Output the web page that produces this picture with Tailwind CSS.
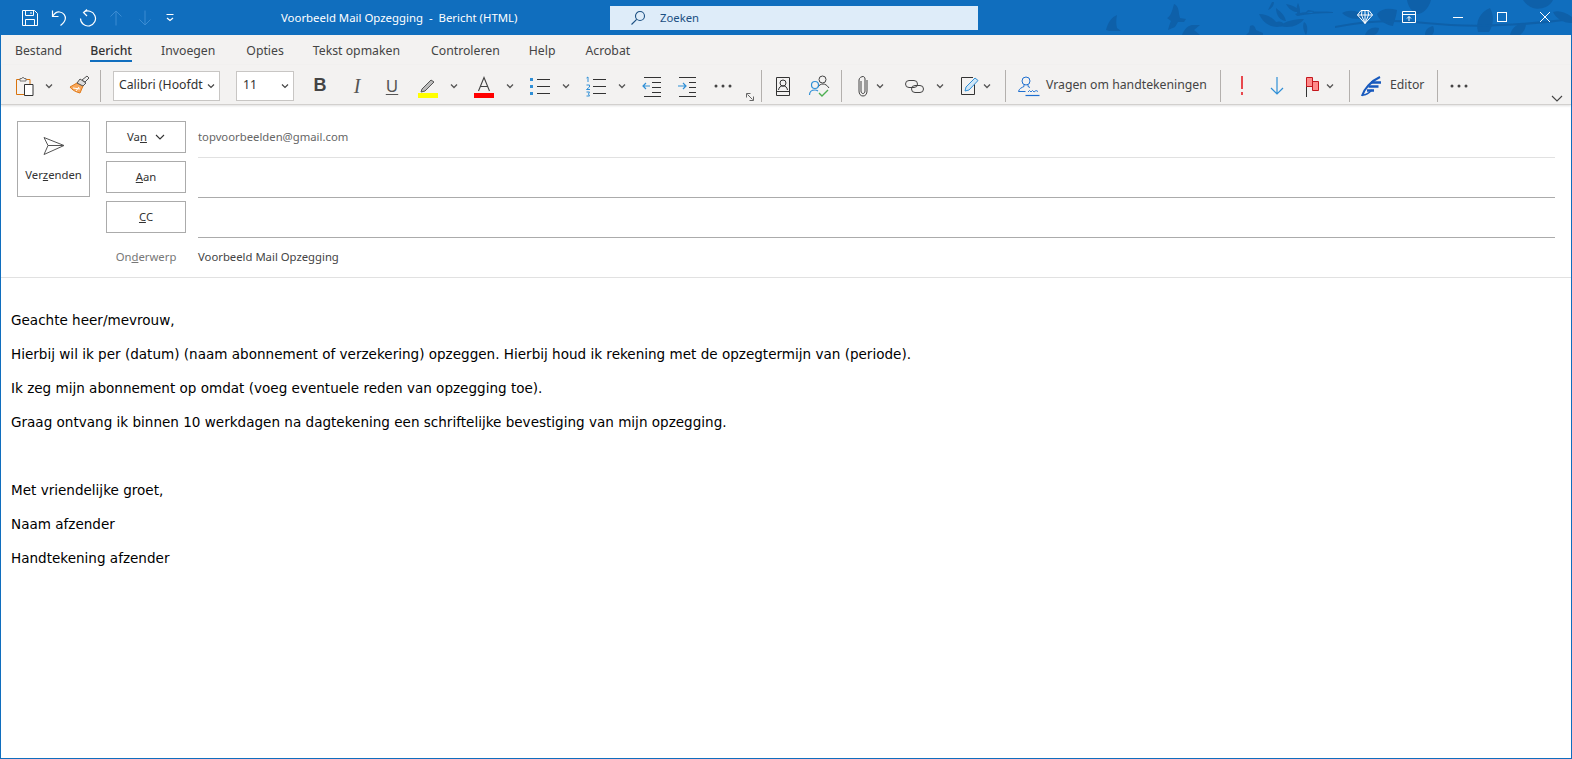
<!DOCTYPE html>
<html lang="nl">
  <head>
    <meta charset="UTF-8" />
    <title>Voorbeeld Mail Opzegging - Bericht (HTML)</title>
    <script src="https://cdn.jsdelivr.net/npm/@tailwindcss/browser@4"></script>
  </head>
  <body class="bg-white overflow-hidden">
    <div class="h-[759px] w-[1572px] flex flex-col border-x border-b border-[#106ebe] font-['Noto_Sans',sans-serif] text-[#444]">
      <!-- Title bar -->
      <div class="relative h-[35px] -mx-px bg-[#106ebe] flex items-center text-white shrink-0 overflow-hidden">
        <!-- leaves -->
        <svg class="absolute left-[1080px] top-0" width="492" height="35" viewBox="0 0 492 35" fill="#0e60a9">
          <path d="M26 30c2-8 6-13 11-15-1 5-1 9 0 13l4 3h-8c-3 0-5 0-7-1z" />
          <path d="M87 18c3-1 5-6 7-14 3 1 5 5 5 10l1 4 6 1-2 3-6 0-3 5-7 3c1-4 2-7 3-9z" />
          <path d="M102 35c2-5 5-9 10-10l8 0-6 5 6 5z" />
          <path d="M166 35l3-3 1-6c3-2 5 0 6 4l7 3 0 2z" />
          <path d="M179 14c6 0 12 2 17 8 3-1 6-1 9 3-6 3-12 2-16 0-4-2-8-6-10-11z" />
          <path d="M196 8c3 3 8 5 10 13-5 0-10-5-10-13zM206 4c6 1 11 3 14 8-5 1-11-2-14-8zM218 3c2 4 3 10 1 13-3-3-3-9-1-13zM192 2c-2 4-3 6-4 8 3-1 6-4 6-8z" />
          <path d="M200 26c6-5 13-7 24-7-4 6-14 10-24 7zM224 22c4 2 4 9 2 13-2-3-4-9-2-13z" />
          <path d="M215 14c8-2 20-3 38-2v1c-14 0-26 1-36 3zM226 12c3 1 7 2 8-1l-6-1z" />
          <path d="M262 13c8-4 16-2 24 3-8 5-18 3-24-3z" />
          <path d="M297 14c5-6 12-6 20-4-1 8-3 12-4 16-8-1-14-6-16-12z" />
          <path d="M327 0h24c-2 8-8 14-14 14-6-3-9-8-10-14z" />
          <path d="M398 32c-3-10 2-20 12-24 4 7 4 16-1 24z" />
          <path d="M443 0h30c-4 8-14 10-20 8-5-2-8-5-10-8z" />
          <path d="M255 26c30-6 60-8 90-4 40 4 80 4 147-4v2c-60 8-107 8-147 4-30-4-60-2-90 4z" />
          <path d="M430 35c2-8 8-12 16-12 0 5-2 9-6 12zM473 12c6-2 12 0 19 5v6c-10 0-16-5-19-11z" />
          <path d="M285 35c2-6 8-9 14-7 0 3-2 6-5 7zM345 35c0-5 3-8 8-9 2 4 1 7-1 9z" />
        </svg>

        <!-- quick access -->
        <div class="relative flex items-center">
          <span class="ml-[21px] w-[18px] h-[18px]">
            <svg width="18" height="18" viewBox="0 0 18 18" fill="none" stroke="#fff"><path d="M1.500 1.500h12l3 3v12h-15zM4.500 1.500v5h8v-5M4.500 16.500v-6h9v6M10 3v2" /></svg>
          </span>
          <span class="ml-[11px] w-[18px] h-[18px]">
            <svg width="18" height="18" viewBox="0 0 18 18" fill="none" stroke="#fff" stroke-width="1.200"><path d="M2.500 1.500v6h6M2.800 7c2-3 4.500-4.500 7-4 4 .7 6 4 5.500 7-.4 3-3 5-4.800 6.500" /></svg>
          </span>
          <span class="ml-[11px] w-[18px] h-[18px]">
            <svg width="18" height="18" viewBox="0 0 18 18" fill="none" stroke="#fff" stroke-width="1.200"><path d="M4.500 3.500a7.500 7.500 0 1 1-3 6M8 .5 4.500 3.500 8 7" /></svg>
          </span>
          <span class="ml-[10px] w-[18px] h-[18px]">
            <svg width="18" height="18" viewBox="0 0 18 18" fill="none" stroke="#3a8bd2"><path d="M9 16.500V2M3.500 7.500 9 2l5.500 5.500" /></svg>
          </span>
          <span class="ml-[11px] w-[18px] h-[18px]">
            <svg width="18" height="18" viewBox="0 0 18 18" fill="none" stroke="#3a8bd2"><path d="M9 1.500V16M3.500 10.500 9 16l5.500-5.500" /></svg>
          </span>
          <span class="ml-[11px] w-[10px] h-[10px]">
            <svg width="10" height="10" viewBox="0 0 10 10" fill="none" stroke="#fff"><path d="M1.500 1.500h7" /><path d="M2 5l3 2.500L8 5" stroke-width="1.200" /></svg>
          </span>
        </div>

        <div class="relative ml-[106px] w-[329px] text-[11.4px] whitespace-pre">Voorbeeld Mail Opzegging  -  Bericht (HTML)</div>
        <div class="relative w-[368px] h-[24px] mt-[1px] bg-[#deecf9] flex items-center text-[11.3px] text-[#1b4f82]">
          <svg class="ml-[20px]" width="16" height="16" viewBox="0 0 16 16" fill="none" stroke="#1b4f82" stroke-width="1.100"><circle cx="10" cy="6" r="4.500" /><path d="M6.700 9.300 1.500 14.500" /></svg>
          <span class="ml-[14px]">Zoeken</span>
        </div>

        <!-- window controls -->
        <div class="absolute right-0 top-0 h-full">
          <svg class="absolute right-[198px] top-[8px]" width="18" height="18" viewBox="0 0 18 18" fill="none" stroke="#fff"><path d="M5 2.500h8l3.500 4.500L9 15.500 1.500 7zM1.500 7h15M6 2.500 5.500 7 9 15.500 12.500 7 12 2.500M9 2.500V15" /></svg>
          <svg class="absolute right-[156px] top-[11px]" width="14" height="12" viewBox="0 0 14 12" fill="none" stroke="#fff"><path d="M.500.500h13v11H.500zM.500 3.500h13M7 10V5.500M5 7.500l2-2 2 2" /></svg>
          <span class="absolute right-[109px] top-[17px] w-[10px] h-px bg-white"></span>
          <span class="absolute right-[65px] top-[12px] w-[10px] h-[10px] border border-white"></span>
          <svg class="absolute right-[22px] top-[12px]" width="10" height="10" viewBox="0 0 10 10" stroke="#fff"><path d="M0 0l10 10M10 0 0 10" /></svg>
        </div>
      </div>

      <!-- Tabs -->
      <div class="h-[30px] shrink-0 bg-[#f3f2f1] flex items-start pl-[14px] text-[12.25px] leading-[32px] text-[#444]">
        <span>Bestand</span>
        <span class="relative ml-[28px] font-medium text-[#333]">
          Bericht
          <span class="absolute left-0 right-0 top-[25px] h-[2px] bg-[#106ebe]"></span>
        </span>
        <span class="ml-[29px]">Invoegen</span>
        <span class="ml-[31px]">Opties</span>
        <span class="ml-[29px]">Tekst opmaken</span>
        <span class="ml-[31px]">Controleren</span>
        <span class="ml-[29px]">Help</span>
        <span class="ml-[30px]">Acrobat</span>
      </div>

      <!-- Ribbon -->
      <div class="relative h-[40px] shrink-0 pt-[2px] bg-[#f3f2f1] border-b border-[#d2d0ce] shadow-[0_1px_2px_rgba(0,0,0,0.12)] flex items-center text-[12.25px] text-[#444]">
        <span class="ml-[11px] w-[24px] h-[24px]">
          <svg width="24" height="24" viewBox="0 0 24 24" fill="none">
            <path d="M4.500 5.500H18v15H4.500z" stroke="#d9730d" />
            <path d="M12.500 10.500H21v11h-8.500z" fill="#fff" stroke="#333" />
            <path d="M8 7V4.500h2l1-1.500 1 1.500h2V7z" fill="#f3f2f1" stroke="#777" />
          </svg>
        </span>
        <span class="ml-[6px] w-[14px] flex justify-center"><svg width="8" height="6" viewBox="0 0 8 6" fill="none" stroke="#555" stroke-width="1.300"><path d="M1 1.500l3 3 3-3" /></svg></span>
        <span class="ml-[11px] w-[24px] h-[24px]">
          <svg width="24" height="24" viewBox="0 0 24 24" fill="none">
            <path d="M3 13l7-4 6 3-3 7c-4-1-8-3-10-6z" fill="#f7a85c" stroke="#e07a1a" />
            <path d="M6 14l7 1M9 17l3-4" stroke="#fff" />
            <path d="M10 9l3-4 6 4-3 3z" fill="#ddd" stroke="#555" />
            <path d="M15 6l5-4 2 2-4 4z" fill="#eee" stroke="#555" />
          </svg>
        </span>
        <span class="ml-[9px] w-px h-[32px] bg-[#b3b0ad]"></span>

        <span class="ml-[12px] w-[107px] h-[30px] bg-white border border-[#c8c6c4] flex items-center justify-between pl-[5px] pr-[4px] text-[#323130] whitespace-nowrap">
          Calibri (Hoofdt
          <svg width="8" height="6" viewBox="0 0 8 6" fill="none" stroke="#444" stroke-width="1.200"><path d="M1 1.500l3 3 3-3" /></svg>
        </span>
        <span class="ml-[16px] w-[58px] h-[30px] bg-white border border-[#c8c6c4] flex items-center justify-between pl-[6px] pr-[4px] text-[#323130]">
          11
          <svg width="8" height="6" viewBox="0 0 8 6" fill="none" stroke="#444" stroke-width="1.200"><path d="M1 1.500l3 3 3-3" /></svg>
        </span>

        <span class="ml-[14px] w-[24px] text-center text-[18px] font-bold text-[#444] font-['Liberation_Sans',sans-serif]">B</span>
        <span class="ml-[13px] w-[24px] text-center text-[20px] italic text-[#555] font-['Liberation_Serif',serif]">I</span>
        <span class="ml-[11px] w-[24px] text-center text-[17px] text-[#555] underline underline-offset-2">U</span>

        <span class="ml-[12px] w-[24px] h-[24px]">
          <svg width="24" height="24" viewBox="0 0 24 24" fill="none">
            <path d="M6 15l9-9 3 2-9 9-4 1z" fill="#bbb" stroke="#555" />
            <path d="M2 19h20v5H2z" fill="#ffff00" />
          </svg>
        </span>
        <span class="ml-[7px] w-[14px] flex justify-center"><svg width="8" height="6" viewBox="0 0 8 6" fill="none" stroke="#555" stroke-width="1.300"><path d="M1 1.500l3 3 3-3" /></svg></span>
        <span class="ml-[11px] w-[24px] h-[24px]">
          <svg width="24" height="24" viewBox="0 0 24 24" fill="none">
            <path d="M6.500 17 12 3.500 17.500 17M8.500 12.500h7" stroke="#444" stroke-width="1.100" />
            <path d="M2 19h20v5H2z" fill="#f00" />
          </svg>
        </span>
        <span class="ml-[7px] w-[14px] flex justify-center"><svg width="8" height="6" viewBox="0 0 8 6" fill="none" stroke="#555" stroke-width="1.300"><path d="M1 1.500l3 3 3-3" /></svg></span>
        <span class="ml-[11px] w-[24px] h-[24px]">
          <svg width="24" height="24" viewBox="0 0 24 24">
            <path d="M2 4h3v3H2zM2 11h3v3H2zM2 18h3v3H2z" fill="#2f8fd6" />
            <path d="M9 5.500h13M9 12.500h13M9 19.500h13" stroke="#333" />
          </svg>
        </span>
        <span class="ml-[7px] w-[14px] flex justify-center"><svg width="8" height="6" viewBox="0 0 8 6" fill="none" stroke="#555" stroke-width="1.300"><path d="M1 1.500l3 3 3-3" /></svg></span>
        <span class="ml-[11px] w-[24px] h-[24px]">
          <svg width="24" height="24" viewBox="0 0 24 24" fill="none" stroke="#2f8fd6">
            <path d="M2.500 4 4 3v5M2.500 11h3v2l-3 2.500h3.500M2.500 18h3l-1 2 1 2h-3" />
            <path d="M9 5.500h13M9 12.500h13M9 19.500h13" stroke="#333" />
          </svg>
        </span>
        <span class="ml-[7px] w-[14px] flex justify-center"><svg width="8" height="6" viewBox="0 0 8 6" fill="none" stroke="#555" stroke-width="1.300"><path d="M1 1.500l3 3 3-3" /></svg></span>
        <span class="ml-[11px] w-[24px] h-[24px]">
          <svg width="24" height="24" viewBox="0 0 24 24" fill="none">
            <path d="M4 3.500h17M12 8.500h9M12 13.500h9M12 18.500h9M4 22.500h17" stroke="#333" />
            <path d="M10 12H3M6 9l-3 3 3 3" stroke="#2f8fd6" stroke-width="1.200" />
          </svg>
        </span>
        <span class="ml-[11px] w-[24px] h-[24px]">
          <svg width="24" height="24" viewBox="0 0 24 24" fill="none">
            <path d="M4 3.500h17M14 8.500h7M14 13.500h7M14 18.500h7M4 22.500h17" stroke="#333" />
            <path d="M3 12h8M8 9l3 3-3 3" stroke="#2f8fd6" stroke-width="1.200" />
          </svg>
        </span>
        <span class="ml-[12px] w-[24px] flex justify-center">
          <svg width="18" height="4" viewBox="0 0 18 4" fill="#444"><circle cx="2" cy="2" r="1.500" /><circle cx="9" cy="2" r="1.500" /><circle cx="16" cy="2" r="1.500" /></svg>
        </span>
        <span class="ml-[11px] w-[8px] h-[8px] self-end mb-[3px] mr-[2px]">
          <svg width="8" height="8" viewBox="0 0 8 8" fill="none" stroke="#555" stroke-width=".900"><path d="M.500 4.500V.500h4M1.500 1.500l5 5M7.500 3.500v4h-4" /></svg>
        </span>
        <span class="ml-[5px] w-px h-[32px] bg-[#b3b0ad]"></span>

        <span class="ml-[9px] w-[24px] h-[24px]">
          <svg width="24" height="24" viewBox="0 0 24 24" fill="none" stroke="#333">
            <path d="M5.500 3.500h13v18h-13zM5.500 17.500h13" />
            <circle cx="12" cy="9" r="3" />
            <path d="M7.500 16c.5-3 2-4 4.500-4s4 1 4.500 4" />
          </svg>
        </span>
        <span class="ml-[13px] w-[24px] h-[24px]">
          <svg width="24" height="24" viewBox="0 0 24 24" fill="none">
            <circle cx="14.500" cy="5.500" r="3.500" stroke="#444" />
            <path d="M10 13c1-2 3-3 5-3s4 1 6 4" stroke="#444" />
            <circle cx="7" cy="11" r="3.500" stroke="#2f8fd6" stroke-width="1.200" />
            <path d="M1.500 21c0-3 2-5 5.500-5 1 0 2 .3 3 1" stroke="#2f8fd6" stroke-width="1.200" />
            <path d="M11 19l3 3 6-6" stroke="#4caf50" stroke-width="1.400" />
          </svg>
        </span>
        <span class="ml-[9px] w-px h-[32px] bg-[#b3b0ad]"></span>

        <span class="ml-[11px] w-[20px] h-[24px] flex justify-center">
          <svg width="12" height="24" viewBox="0 0 12 24" fill="none" stroke="#444"><path d="M4 7v10c0 1.500.8 2.500 2 2.500s2-1 2-2.500V5C8 3.500 7 2.500 6 2.500S2 3.500 2 6v11c0 3 1.500 5 4 5s4-2 4-5V6" /></svg>
        </span>
        <span class="w-[14px] flex justify-center"><svg width="8" height="6" viewBox="0 0 8 6" fill="none" stroke="#555" stroke-width="1.300"><path d="M1 1.500l3 3 3-3" /></svg></span>
        <span class="ml-[14px] w-[24px] h-[24px]">
          <svg width="24" height="24" viewBox="0 0 24 24" fill="none" stroke="#444">
            <rect x="4.500" y="6.500" width="12" height="7" rx="3.500" />
            <rect x="10.500" y="11.500" width="12" height="7" rx="3.500" />
          </svg>
        </span>
        <span class="ml-[8px] w-[14px] flex justify-center"><svg width="8" height="6" viewBox="0 0 8 6" fill="none" stroke="#555" stroke-width="1.300"><path d="M1 1.500l3 3 3-3" /></svg></span>
        <span class="ml-[13px] w-[20px] h-[24px] flex items-center">
          <svg width="20" height="20" viewBox="0 0 20 20" fill="none">
            <path d="M13 1.500H1.500v17h13V8" stroke="#333" />
            <path d="M5 15l1-4 9-9 3 2.500-9 9.500z" fill="#cfe6f7" stroke="#2f8fd6" />
          </svg>
        </span>
        <span class="w-[14px] flex justify-center"><svg width="8" height="6" viewBox="0 0 8 6" fill="none" stroke="#555" stroke-width="1.300"><path d="M1 1.500l3 3 3-3" /></svg></span>
        <span class="ml-[11px] w-px h-[32px] bg-[#b3b0ad]"></span>

        <span class="ml-[10px] w-[24px] h-[24px]">
          <svg width="24" height="24" viewBox="0 0 24 24" fill="none" stroke="#1e6fd0">
            <circle cx="10" cy="7" r="4" />
            <path d="M8 11v1.500c-2 1-5 2-5.500 5h7M12 11v1.500l2 1" />
            <path d="M9.500 21.500h14" stroke-width="1.200" />
            <path d="M12 18l1.500-1.500L15 18l1.500-1.500L18 18l2-1.500 2 1" stroke-width=".900" />
          </svg>
        </span>
        <span class="ml-[6px] w-[161px] whitespace-nowrap">Vragen om handtekeningen</span>
        <span class="ml-[13px] w-px h-[32px] bg-[#b3b0ad]"></span>

        <span class="ml-[9px] w-[24px] flex justify-center">
          <svg width="4" height="20" viewBox="0 0 4 20" fill="#e8484d"><path d="M1 0h2v13H1zM1 16h2v3H1z" /></svg>
        </span>
        <span class="ml-[11px] w-[24px] flex justify-center">
          <svg width="16" height="20" viewBox="0 0 16 20" fill="none" stroke="#2f8fd6" stroke-width="1.200"><path d="M8 1v17M2 12l6 6 6-6" /></svg>
        </span>
        <span class="ml-[12px] w-[24px] h-[24px]">
          <svg width="24" height="24" viewBox="0 0 24 24" fill="none">
            <path d="M5.500 4v19" stroke="#333" />
            <path d="M5.500 3.500h6v9h-6z" fill="#ff8a8a" stroke="#c4161c" />
            <path d="M11.500 7.500h6v9h-6z" fill="#ff8a8a" stroke="#c4161c" />
          </svg>
        </span>
        <span class="-ml-[2px] w-[14px] flex justify-center"><svg width="8" height="6" viewBox="0 0 8 6" fill="none" stroke="#555" stroke-width="1.300"><path d="M1 1.500l3 3 3-3" /></svg></span>
        <span class="ml-[12px] w-px h-[32px] bg-[#b3b0ad]"></span>

        <span class="ml-[9px] w-[24px] h-[24px]">
          <svg width="24" height="24" viewBox="0 0 24 24" fill="none" stroke="#185abd">
            <path d="M3 22C5 15 12 7 21 3" stroke-width="2.200" />
            <path d="M4 21c4 0 7-3 9-5" stroke-width="1.500" />
            <path d="M12 8.500h10M9.500 12.500h10M8 16.500h7" stroke-width="2.400" />
          </svg>
        </span>
        <span class="ml-[7px] w-[35px] whitespace-nowrap">Editor</span>
        <span class="ml-[12px] w-px h-[32px] bg-[#b3b0ad]"></span>
        <span class="ml-[9px] w-[24px] flex justify-center">
          <svg width="18" height="4" viewBox="0 0 18 4" fill="#444"><circle cx="2" cy="2" r="1.500" /><circle cx="9" cy="2" r="1.500" /><circle cx="16" cy="2" r="1.500" /></svg>
        </span>
        <span class="ml-[79px] w-[14px] flex justify-center self-end mb-[2px]">
          <svg width="12" height="7" viewBox="0 0 12 7" fill="none" stroke="#444" stroke-width="1.100"><path d="M1 1l5 5 5-5" /></svg>
        </span>
      </div>

      <!-- Compose header -->
      <div class="h-[173px] shrink-0 flex pt-[13px] border-b border-[#e1e1e1] text-[11.3px] bg-white">
        <div class="ml-[16px] mt-[3px] w-[73px] h-[76px] border border-[#ababab] flex flex-col items-center shrink-0">
          <svg class="mt-[14px]" width="24" height="20" viewBox="0 0 24 20" fill="none" stroke="#555"><path d="M2 1.500 22 9.500 2 18.500 6 9.500zM6 9.500h16" /></svg>
          <span class="mt-[11px] text-[#333]">Ver<span class="underline">z</span>enden</span>
        </div>
        <div class="ml-[16px] flex-1 mr-[16px] flex flex-col">
          <div class="h-[40px] flex">
            <div class="mt-[3px] w-[80px] h-[32px] border border-[#ababab] flex items-center justify-center gap-[8px] text-[#333] shrink-0">
              <span>Va<span class="underline">n</span></span>
              <svg width="10" height="7" viewBox="0 0 10 7" fill="none" stroke="#333" stroke-width="1.100"><path d="M1 1l4 4 4-4" /></svg>
            </div>
            <div class="ml-[12px] flex-1 border-b border-[#e1e1e1] text-[#666] leading-[38px]">topvoorbeelden@gmail.com</div>
          </div>
          <div class="h-[40px] flex">
            <div class="mt-[3px] w-[80px] h-[32px] border border-[#ababab] flex items-center justify-center text-[#333] shrink-0"><span><span class="underline">A</span>an</span></div>
            <div class="ml-[12px] flex-1 border-b border-[#ababab]"></div>
          </div>
          <div class="h-[40px] flex">
            <div class="mt-[3px] w-[80px] h-[32px] border border-[#ababab] flex items-center justify-center text-[#333] shrink-0"><span><span class="underline">C</span>C</span></div>
            <div class="ml-[12px] flex-1 border-b border-[#ababab]"></div>
          </div>
          <div class="h-[39px] flex items-center">
            <div class="w-[80px] text-center text-[#777] shrink-0">On<span class="underline">d</span>erwerp</div>
            <div class="ml-[12px] text-[#444]">Voorbeeld Mail Opzegging</div>
          </div>
        </div>
      </div>

      <!-- Body -->
      <div class="pt-[25px] pl-[10px] text-[13.56px] leading-[34px] text-black font-['DejaVu_Sans',sans-serif]">
        <p class="h-[34px]">Geachte heer/mevrouw,</p>
        <p class="h-[34px]">Hierbij wil ik per (datum) (naam abonnement of verzekering) opzeggen. Hierbij houd ik rekening met de opzegtermijn van (periode).</p>
        <p class="h-[34px]">Ik zeg mijn abonnement op omdat (voeg eventuele reden van opzegging toe).</p>
        <p class="h-[34px]">Graag ontvang ik binnen 10 werkdagen na dagtekening een schriftelijke bevestiging van mijn opzegging.</p>
        <p class="h-[34px]"></p>
        <p class="h-[34px]">Met vriendelijke groet,</p>
        <p class="h-[34px]">Naam afzender</p>
        <p class="h-[34px]">Handtekening afzender</p>
      </div>
    </div>
  </body>
</html>
